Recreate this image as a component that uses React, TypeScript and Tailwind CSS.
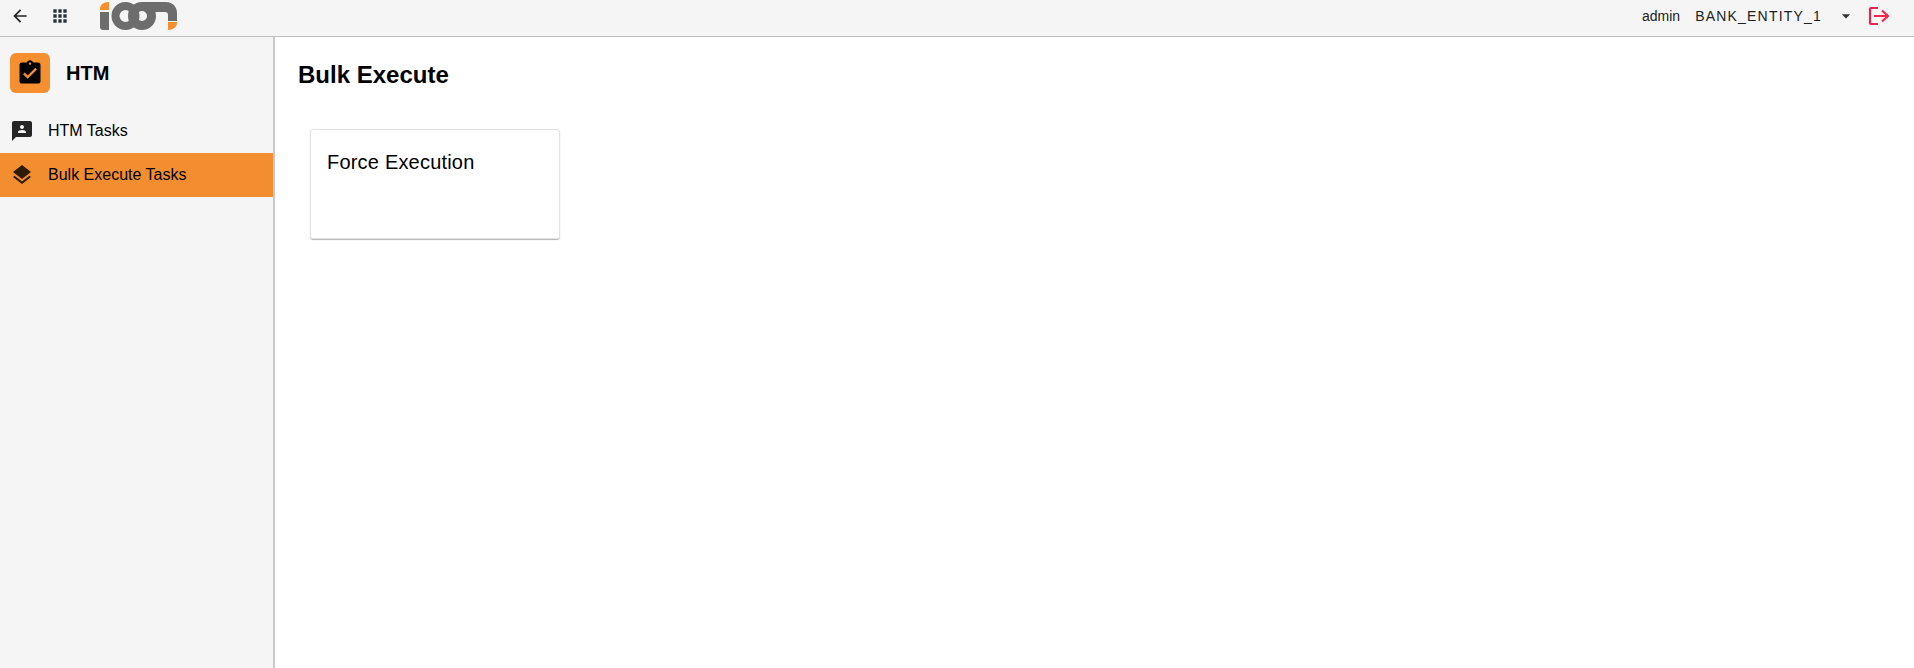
import React from 'react';
import { Md3P, MdApps, MdArrowBack, MdArrowDropDown, MdAssignmentTurnedIn, MdLayers } from 'react-icons/md';

const IconLogo = () => (
  <svg width="80" height="32" viewBox="0 0 80 32" fill="none">
    <path d="M0 10V9C0 5 3 2 9 2V10Z" fill="#f58f30" />
    <path d="M0 12H9V30H3C1 30 0 29 0 27Z" fill="#6d6d6d" />
    <circle cx="25.5" cy="16" r="10" stroke="#6d6d6d" strokeWidth="8" />
    <circle cx="42" cy="16" r="9.5" stroke="#6d6d6d" strokeWidth="9" />
    <path d="M42 2H66C73 2 77 7 77 13V21H68V15C68 13 67 12 65 12H51Z" fill="#6d6d6d" />
    <path d="M68 22H77V23C77 27 73 30 68 30Z" fill="#f58f30" />
  </svg>
);

const LogoutIcon = () => (
  <svg width="22" height="20" viewBox="0 0 22 20" fill="none" stroke="#f5234a" strokeWidth="2.2" strokeLinejoin="round">
    <path d="M10 2H3Q2 2 2 3V17Q2 18 3 18H10" />
    <path d="M6 10H20M14 4.5L20 10L14 15.5" />
  </svg>
);

export default function App() {
  return (
    <div className="h-[668px] flex flex-col bg-white font-['Liberation_Sans',sans-serif] overflow-hidden">
      <header className="h-[37px] shrink-0 flex items-start bg-[#f5f5f5] border-b border-[#bdbdbd]">
        <div className="flex items-center h-8 pl-[10px]">
          <MdArrowBack size={20} className="text-[#222]" />
          <MdApps size={20} className="text-[#263238] ml-5" />
          <div className="ml-[30px]">
            <IconLogo />
          </div>
        </div>
        <div className="ml-auto flex items-center h-8 pr-[24px] text-sm text-[#212121]">
          <span>admin</span>
          <span className="ml-[15px] tracking-[1.2px]">BANK_ENTITY_1</span>
          <MdArrowDropDown size={20} className="ml-[14px] text-[#333]" />
          <div className="ml-[12px]">
            <LogoutIcon />
          </div>
        </div>
      </header>
      <div className="flex flex-1 min-h-0">
        <aside className="w-[275px] shrink-0 bg-[#f5f5f5] border-r-2 border-[#c8c8c8]">
          <div className="flex items-center pl-[10px] pt-4 h-[56px]">
            <div className="w-10 h-10 rounded-md bg-[#f58f30] flex items-center justify-center">
              <MdAssignmentTurnedIn size={28} className="text-black" />
            </div>
            <span className="ml-4 text-[20px] font-bold text-black">HTM</span>
          </div>
          <nav className="mt-4 text-base text-black">
            <div className="h-[44px] flex items-center pl-[10px]">
              <Md3P size={24} className="text-[#262626]" />
              <span className="ml-[14px]">HTM Tasks</span>
            </div>
            <div className="h-[44px] flex items-center pl-[10px] bg-[#f28e30]">
              <MdLayers size={24} className="text-[#2e1c08]" />
              <span className="ml-[14px]">Bulk Execute Tasks</span>
            </div>
          </nav>
        </aside>
        <main className="flex-1 pl-[23px] pt-6">
          <h1 className="text-2xl font-bold leading-[28px] text-black">Bulk Execute</h1>
          <div className="mt-10 ml-3 w-[250px] h-[110px] rounded-[3px] border border-[#e2e2e2] shadow-[0_1px_1px_rgba(0,0,0,0.3)] px-[16px] pt-[20px]">
            <p className="text-xl leading-[24px] tracking-[0.2px] text-black">Force Execution</p>
          </div>
        </main>
      </div>
    </div>
  );
}
